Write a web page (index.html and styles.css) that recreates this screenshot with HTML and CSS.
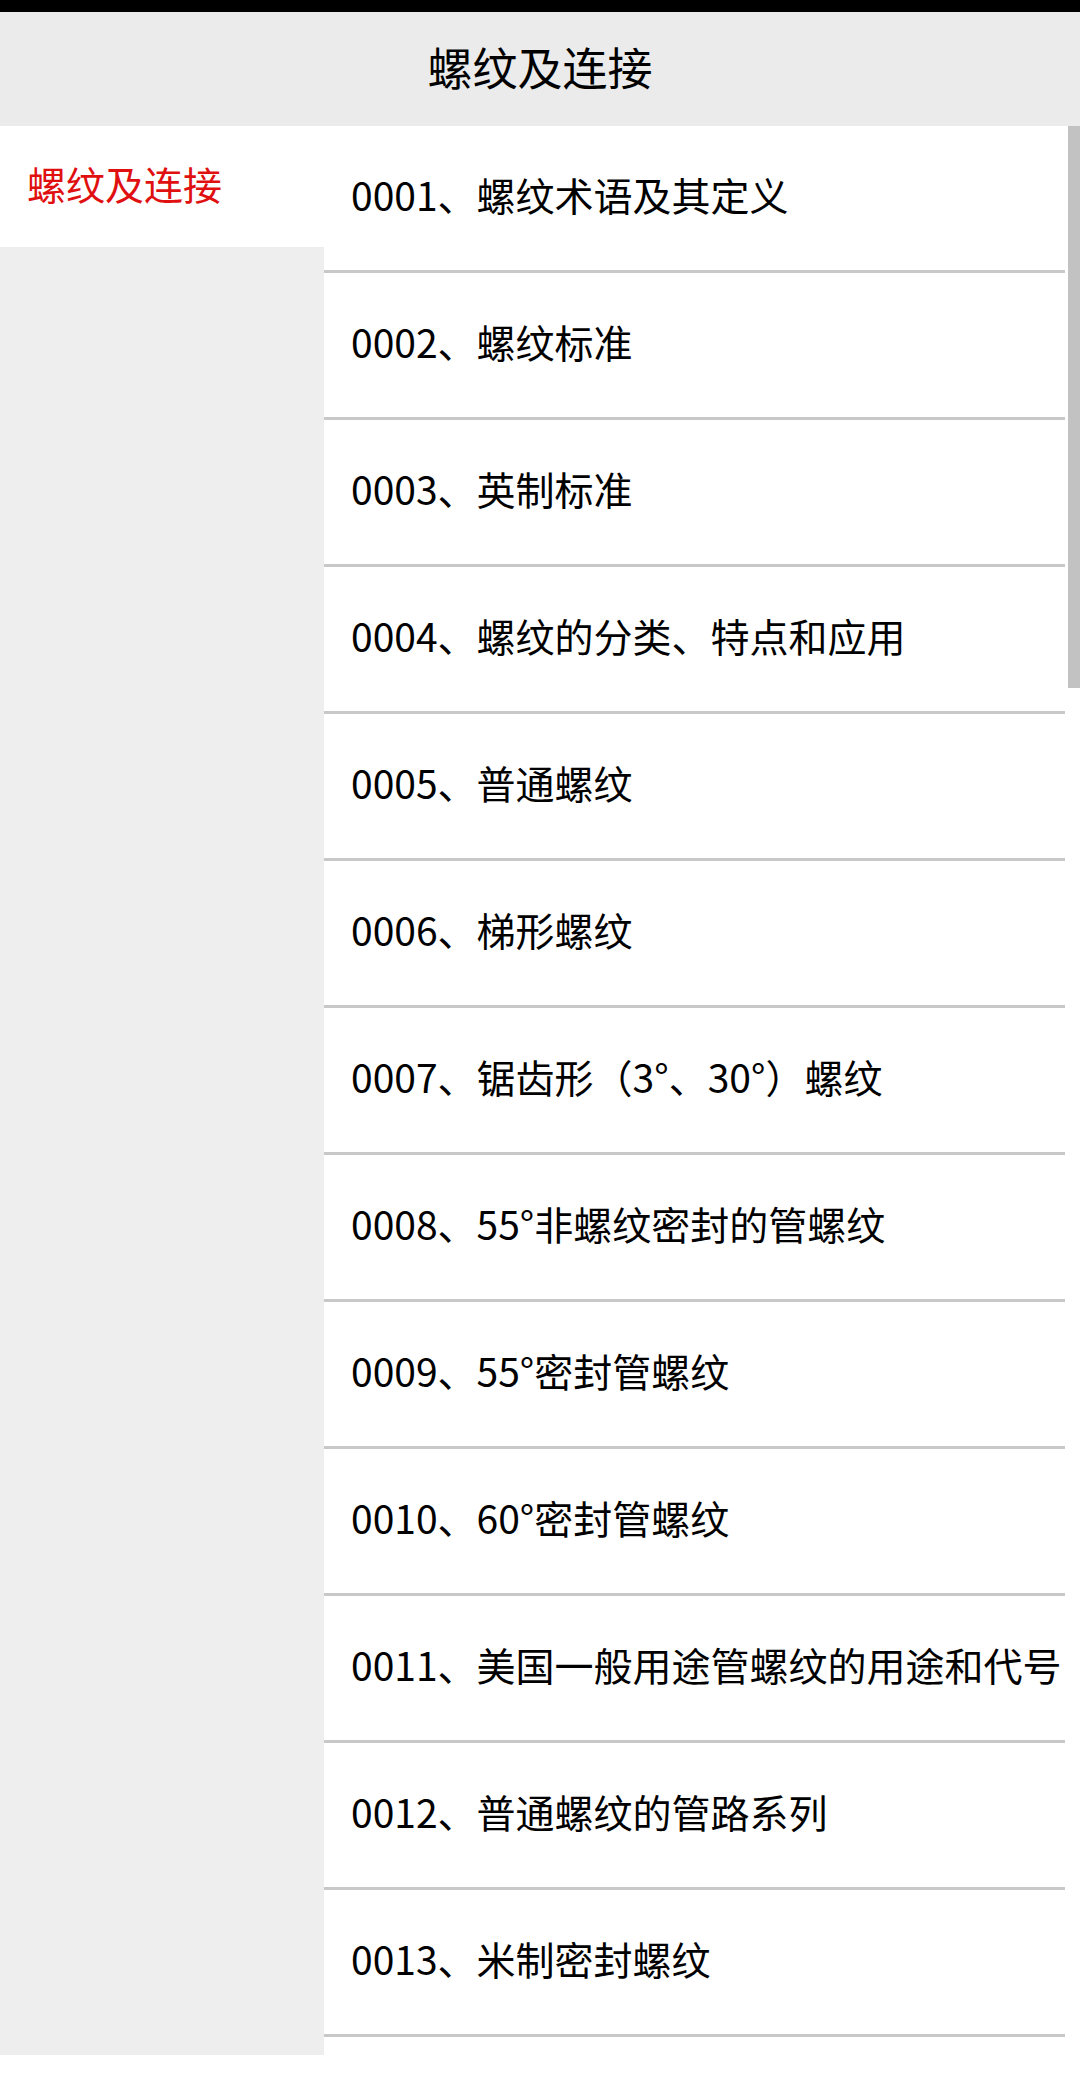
FILE: index.html
```html
<!DOCTYPE html>
<html lang="zh-CN">
<head>
    <meta charset="UTF-8">
    <meta name="viewport" content="width=device-width, initial-scale=1.0">
    <title>螺纹及连接</title>
    <link rel="stylesheet" href="styles.css">
</head>
<body>

    <!-- Status bar -->
    <div class="status-bar"></div>

    <!-- Title -->
    <header class="title-bar">
        <h1>螺纹及连接</h1>
    </header>

    <div class="content">
        <!-- Category menu -->
        <nav class="side-menu">
            <div class="side-item active">螺纹及连接</div>
        </nav>

        <!-- Topic list -->
        <div class="list-wrap">
            <ul class="topic-list">
                <li>0001、螺纹术语及其定义</li>
                <li>0002、螺纹标准</li>
                <li>0003、英制标准</li>
                <li>0004、螺纹的分类、特点和应用</li>
                <li>0005、普通螺纹</li>
                <li>0006、梯形螺纹</li>
                <li>0007、锯齿形（3°、30°）螺纹</li>
                <li>0008、55°非螺纹密封的管螺纹</li>
                <li>0009、55°密封管螺纹</li>
                <li>0010、60°密封管螺纹</li>
                <li>0011、美国一般用途管螺纹的用途和代号</li>
                <li>0012、普通螺纹的管路系列</li>
                <li>0013、米制密封螺纹</li>
                <li></li>
            </ul>
            <div class="scroll-thumb"></div>
        </div>
    </div>

    <div class="nav-space"></div>

</body>
</html>
```

FILE: styles.css
```css
body {
    margin: 0;
    width: 1080px;
    height: 2076px;
    overflow: hidden;
    background-color: white;
    font-family: "Noto Sans CJK SC", "Noto Sans", sans-serif;
    color: #000;
}
.status-bar {
    height: 12px;
    background-color: #000;
}
.title-bar {
    height: 108px;
    padding-bottom: 6px;
    background-color: #ebebeb;
    display: flex;
    align-items: center;
    justify-content: center;
}
.title-bar h1 {
    margin: 0;
    font-size: 45px;
    font-weight: normal;
}
.content {
    display: flex;
    height: 1929px;
    overflow: hidden;
}
.side-menu {
    width: 324px;
    flex-shrink: 0;
    background-color: #eeeeee;
}
.side-item {
    height: 113px;
    padding: 0 0 8px 27px;
    display: flex;
    align-items: center;
    font-size: 39px;
    white-space: nowrap;
}
.side-item.active {
    background-color: white;
    color: #e01010;
}
.list-wrap {
    flex: 1;
    position: relative;
    background-color: white;
}
.topic-list {
    list-style: none;
    margin: 0 15px 0 0;
    padding: 0;
}
.topic-list li {
    height: 136px;
    padding: 0 0 8px 27px;
    display: flex;
    align-items: center;
    font-size: 39px;
    white-space: nowrap;
    border-bottom: 3px solid #c8c8c8;
}
.scroll-thumb {
    position: absolute;
    top: 0;
    right: 0;
    width: 12px;
    height: 562px;
    background-color: #c2c2c2;
}
.nav-space {
    height: 21px;
    background-color: white;
}
```
